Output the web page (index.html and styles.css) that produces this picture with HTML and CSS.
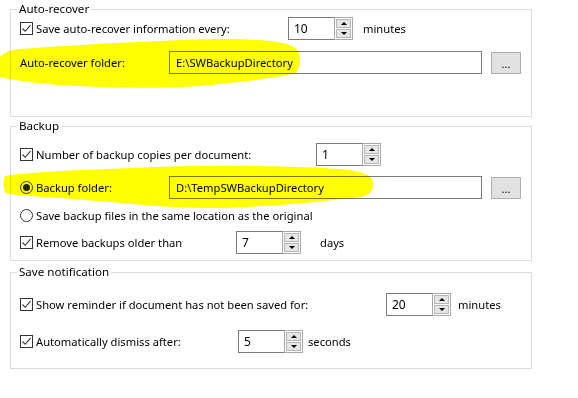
FILE: index.html
```html
<!DOCTYPE html>
<html lang="en">
<head>
  <meta charset="UTF-8" />
  <meta name="viewport" content="width=device-width, initial-scale=1.0" />
  <title>Backup/Recover</title>
  <link rel="stylesheet" href="styles.css">
</head>
<body>
  <div class="page">
    <fieldset class="group group-recover">
      <legend>Auto-recover</legend>
      <div class="row">
        <label class="opt w268"><span class="check"><svg viewBox="0 0 13 13"><path d="M2.5 6.5 L5.2 9.3 L10.5 3.2" /></svg></span>Save auto-recover information every:</label>
        <div class="spin"><span class="spin-val">10</span><span class="spin-btns"><span class="spin-btn up"></span><span class="spin-btn down"></span></span></div>
        <span class="unit ml10">minutes</span>
      </div>
      <div class="row row-gap11">
        <span class="opt w149">Auto-recover folder:</span>
        <div class="path">E:\SWBackupDirectory</div>
        <button class="browse">...</button>
      </div>
    </fieldset>

    <fieldset class="group group-backup">
      <legend>Backup</legend>
      <div class="row">
        <label class="opt w296"><span class="check"><svg viewBox="0 0 13 13"><path d="M2.5 6.5 L5.2 9.3 L10.5 3.2" /></svg></span>Number of backup copies per document:</label>
        <div class="spin"><span class="spin-val">1</span><span class="spin-btns"><span class="spin-btn up"></span><span class="spin-btn down"></span></span></div>
      </div>
      <div class="row row-gap10">
        <label class="opt w149"><span class="radio on"></span>Backup folder:</label>
        <div class="path">D:\TempSWBackupDirectory</div>
        <button class="browse">...</button>
      </div>
      <div class="row row-short row-gap8">
        <label class="opt"><span class="radio"></span>Save backup files in the same location as the original</label>
      </div>
      <div class="row row-gap8">
        <label class="opt w216"><span class="check"><svg viewBox="0 0 13 13"><path d="M2.5 6.5 L5.2 9.3 L10.5 3.2" /></svg></span>Remove backups older than</label>
        <div class="spin"><span class="spin-val">7</span><span class="spin-btns"><span class="spin-btn up"></span><span class="spin-btn down"></span></span></div>
        <span class="unit ml19">days</span>
      </div>
    </fieldset>

    <fieldset class="group group-notify">
      <legend>Save notification</legend>
      <div class="row">
        <label class="opt w366"><span class="check"><svg viewBox="0 0 13 13"><path d="M2.5 6.5 L5.2 9.3 L10.5 3.2" /></svg></span>Show reminder if document has not been saved for:</label>
        <div class="spin"><span class="spin-val">20</span><span class="spin-btns"><span class="spin-btn up"></span><span class="spin-btn down"></span></span></div>
        <span class="unit ml7">minutes</span>
      </div>
      <div class="row row-gap14">
        <label class="opt w218"><span class="check"><svg viewBox="0 0 13 13"><path d="M2.5 6.5 L5.2 9.3 L10.5 3.2" /></svg></span>Automatically dismiss after:</label>
        <div class="spin"><span class="spin-val">5</span><span class="spin-btns"><span class="spin-btn up"></span><span class="spin-btn down"></span></span></div>
        <span class="unit ml5">seconds</span>
      </div>
    </fieldset>
  </div>

  <!-- highlighter marks drawn over the form -->
  <svg class="marker" viewBox="0 0 578 398">
    <path d="M0 57 C5 52 10 50 20 49 C60 46 110 43 160 41 C200 39 240 38 270 41 C288 43 297 47 299 53 C301 60 300 67 296 73 C270 79 240 82 200 86 C160 89 110 88 60 85 C35 83 12 80 0 77 Z" />
    <path d="M5 176 C30 172 80 170 130 168 C200 165 280 165 340 169 C362 171 372 175 373 182 C374 190 370 195 360 197 C320 202 280 206 220 208 C170 209 120 202 60 198 C30 196 12 195 5 193 C3 186 3 180 5 176 Z" />
  </svg>
</body>
</html>
```

FILE: styles.css
```css
html {
  background: #fff;
}
body {
  margin: 0;
  font-family: 'Noto Sans', sans-serif;
  font-size: 11.2px;
  color: #000;
  background: #fff;
}
.page {
  padding-top: 2px;
}
.group {
  box-sizing: border-box;
  width: 522px;
  margin: 0 0 0 10px;
  border: 1px solid #dcdcdc;
}
.group legend {
  margin-left: -3px;
  padding: 0 2px;
  font-size: 11.6px;
  line-height: 14px;
}
.group-recover {
  padding: 1px 9px 42px;
}
.group-backup {
  margin-top: 2px;
  padding: 10px 9px 6px;
}
.group-notify {
  margin-top: 4px;
  padding: 14px 9px 15px;
}
.row {
  display: flex;
  align-items: center;
  height: 23px;
}
.row-short {
  height: 16px;
}
.row-gap8 { margin-top: 8px; }
.row-gap10 { margin-top: 10px; }
.row-gap11 { margin-top: 11px; }
.row-gap14 { margin-top: 14px; }

.opt {
  display: flex;
  align-items: center;
  white-space: nowrap;
}
.w149 { flex: 0 0 149px; }
.w216 { flex: 0 0 216px; }
.w218 { flex: 0 0 218px; }
.w268 { flex: 0 0 268px; }
.w296 { flex: 0 0 296px; }
.w366 { flex: 0 0 366px; }

.check {
  box-sizing: border-box;
  width: 13px;
  height: 13px;
  margin-right: 3px;
  border: 1px solid #333;
  background: #fff;
  position: relative;
}
.check svg {
  position: absolute;
  left: -1px;
  top: -1px;
  width: 13px;
  height: 13px;
}
.check path {
  fill: none;
  stroke: #333;
  stroke-width: 1.1;
}
.radio {
  box-sizing: border-box;
  width: 13px;
  height: 13px;
  margin-right: 3px;
  border: 1px solid #333;
  border-radius: 50%;
  background: #fff;
  display: flex;
  align-items: center;
  justify-content: center;
}
.radio.on::after {
  content: "";
  width: 7px;
  height: 7px;
  border-radius: 50%;
  background: #222;
}

.spin {
  display: flex;
  width: 65px;
  height: 23px;
}
.spin-val {
  box-sizing: border-box;
  flex: 1;
  border: 1px solid #7a7a7a;
  border-right: none;
  padding-left: 5px;
  line-height: 21px;
  font-size: 12px;
}
.spin-btns {
  display: flex;
  flex-direction: column;
  width: 19px;
  border: 1px solid #a8a8a8;
  box-sizing: border-box;
}
.spin-btn {
  flex: 1;
  margin: 1px;
  background: #e5e5e5;
  border: 1px solid #b6b6b6;
  display: flex;
  align-items: center;
  justify-content: center;
}
.spin-btn.up { margin-bottom: 0; }
.spin-btn::after {
  content: "";
  border-left: 3px solid transparent;
  border-right: 3px solid transparent;
}
.spin-btn.up::after {
  border-bottom: 3px solid #000;
}
.spin-btn.down::after {
  border-top: 3px solid #000;
}

.unit { white-space: nowrap; }
.ml5 { margin-left: 5px; }
.ml7 { margin-left: 7px; }
.ml10 { margin-left: 10px; }
.ml19 { margin-left: 19px; }

.path {
  box-sizing: border-box;
  width: 313px;
  height: 23px;
  border: 1px solid #7a7a7a;
  background: #fff;
  padding-left: 6px;
  line-height: 21px;
}
.browse {
  box-sizing: border-box;
  width: 30px;
  height: 22px;
  margin-left: 9px;
  padding: 0 0 4px;
  border: 1px solid #adadad;
  background: #e1e1e1;
  font-family: inherit;
  font-size: 11px;
  line-height: 1;
  color: #000;
  display: flex;
  align-items: flex-end;
  justify-content: center;
}

.marker {
  position: absolute;
  left: 0;
  top: 0;
  width: 578px;
  height: 398px;
  pointer-events: none;
  mix-blend-mode: multiply;
}
.marker path {
  fill: #ffff00;
}
```
